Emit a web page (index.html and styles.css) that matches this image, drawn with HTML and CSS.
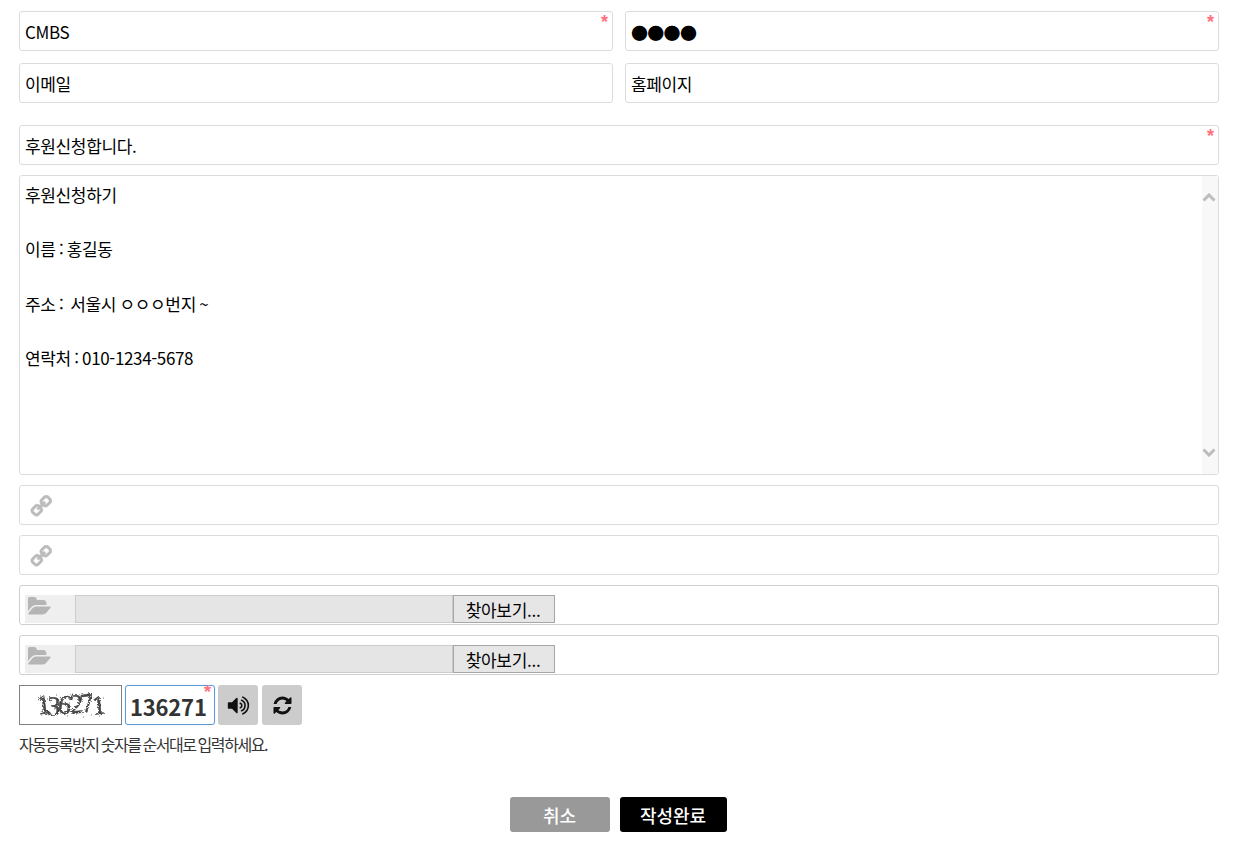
FILE: index.html
```html
<!DOCTYPE html>
<html lang="ko">
<head>
<meta charset="utf-8">
<title>후원신청</title>
<link rel="stylesheet" href="styles.css">
</head>
<body>
<svg class="defs" width="0" height="0" aria-hidden="true">
  <defs>
    <filter id="rough" x="-10%" y="-10%" width="120%" height="120%">
      <feTurbulence type="fractalNoise" baseFrequency="0.6" numOctaves="2" seed="7" result="n"/>
      <feDisplacementMap in="SourceGraphic" in2="n" scale="3.6"/>
    </filter>
  </defs>
  <symbol id="i-link" viewBox="0 0 1792 1792"><path d="M1456 1216q0-40-28-68l-208-208q-28-28-68-28-42 0-72 32 3 3 19 18.5t21.5 21.5 15 19 13 25.5 3.5 27.5q0 40-28 68t-68 28q-15 0-27.5-3.5t-25.5-13-19-15-21.5-21.5-18.5-19q-33 31-33 73 0 40 28 68l206 207q27 27 68 27 40 0 68-26l147-146q28-28 28-67zm-703-705q0-40-28-68l-206-207q-28-28-68-28-39 0-68 27l-147 146q-28 28-28 67 0 40 28 68l208 208q27 27 68 27 42 0 72-31-3-3-19-18.5t-21.5-21.5-15-19-13-25.5-3.5-27.5q0-40 28-68t68-28q15 0 27.5 3.5t25.5 13 19 15 21.5 21.5 18.5 19q33-31 33-73zm895 705q0 120-85 203l-147 146q-83 83-203 83-121 0-204-85l-206-207q-83-83-83-203 0-123 88-209l-88-88q-86 88-208 88-120 0-204-84l-208-208q-84-84-84-204t85-203l147-146q83-83 203-83 121 0 204 85l206 207q83 83 83 203 0 123-88 209l88 88q86-88 208-88 120 0 204 84l208 208q84 84 84 204z"/></symbol>
  <symbol id="i-folder" viewBox="0 0 1920 1792"><path d="M1815 952q0 31-31 66l-336 396q-43 51-120.5 86.5t-143.5 35.5h-1088q-34 0-60.5-13t-26.5-43q0-31 31-66l336-396q43-51 120.5-86.5t143.5-35.5h1088q34 0 60.5 13t26.5 43zm-343-344v160h-832q-94 0-197 47.5t-164 119.5l-337 396-5 6q0-4-.5-12.5t-.5-12.5v-960q0-92 66-158t158-66h320q92 0 158 66t66 158v32h544q92 0 158 66t66 158z"/></symbol>
  <symbol id="i-volume" viewBox="0 0 1792 1792"><path d="M832 352v1088q0 26-19 45t-45 19-45-19l-333-333h-262q-26 0-45-19t-19-45v-384q0-26 19-45t45-19h262l333-333q19-19 45-19t45 19 19 45zm384 544q0 76-42.5 141.5t-112.5 93.5q-10 5-25 5-26 0-45-18.5t-19-45.5q0-21 12-35.5t29-25 34-23 29-36 12-56.5-12-56.5-29-36-34-23-29-25-12-35.5q0-27 19-45.5t45-18.5q15 0 25 5 70 27 112.5 93t42.5 142zm256 0q0 153-85 282.5t-225 188.5q-13 5-25 5-27 0-46-19t-19-45q0-39 39-59 56-29 76-44 74-54 115.5-135.500t41.500-173.500-41.500-173.500-115.500-135.500q-20-15-76-44-39-20-39-59 0-26 19-45t45-19q13 0 26 5 140 59 225 188.500t85 282.500zm256 0q0 230-127 422.500t-338 283.500q-13 5-26 5-26 0-45-19t-19-45q0-36 39-59 7-4 22.500-10.500t22.500-10.500q46-25 82-51 123-91 192-227t69-289-69-289-192-227q-36-26-82-51-7-4-22.500-10.500t-22.500-10.500q-39-23-39-59 0-26 19-45t45-19q13 0 26 5 211 91 338 283.500t127 422.500z"/></symbol>
  <symbol id="i-refresh" viewBox="0 0 1792 1792"><path d="M1639 1056q0 5-1 7-64 268-268 434.500t-478 166.500q-146 0-282.500-55t-243.500-157l-129 129q-19 19-45 19t-45-19-19-45v-448q0-26 19-45t45-19h448q26 0 45 19t19 45-19 45l-137 137q71 66 161 102t187 36q134 0 250-65t186-179q11-17 53-117 8-23 30-23h192q13 0 22.500 9.500t9.500 22.500zm25-800v448q0 26-19 45t-45 19h-448q-26 0-45-19t-19-45 19-45l138-138q-148-137-349-137-134 0-250 65t-186 179q-11 17-53 117-8 23-30 23h-199q-13 0-22.500-9.500t-9.500-22.500v-7q65-268 270-434.500t480-166.500q146 0 284 55.500t245 156.500l130-129q19-19 45-19t45 19 19 45z"/></symbol>
</svg>

<form class="form">
  <div class="pair">
    <div class="field">CMBS<span class="req">*</span></div>
    <div class="field field-pw">●●●●<span class="req">*</span></div>
  </div>
  <div class="pair">
    <div class="field">이메일</div>
    <div class="field field-home">홈페이지</div>
  </div>
  <div class="field field-subject">후원신청합니다.<span class="req">*</span></div>
  <div class="editor">
    <div class="editor-text">후원신청하기

이름 : 홍길동

주소 :  서울시 ㅇㅇㅇ번지 ~

연락처 : 010-1234-5678</div>
    <div class="scrollbar">
      <svg class="chev" viewBox="0 0 14 9"><path d="M1.5 7.5 7 2l5.500 5.500"/></svg>
      <svg class="chev" viewBox="0 0 14 9"><path d="M1.500 1.500 7 7l5.500-5.500"/></svg>
    </div>
  </div>
  <div class="field field-icon"><svg class="ico-link"><use href="#i-link"/></svg></div>
  <div class="field field-icon"><svg class="ico-link"><use href="#i-link"/></svg></div>
  <div class="field file-row">
    <span class="file-ico"><svg class="ico-folder"><use href="#i-folder"/></svg></span>
    <span class="file-name"></span>
    <span class="file-btn">찾아보기...</span>
  </div>
  <div class="field file-row">
    <span class="file-ico"><svg class="ico-folder"><use href="#i-folder"/></svg></span>
    <span class="file-name"></span>
    <span class="file-btn">찾아보기...</span>
  </div>
  <div class="captcha">
    <div class="captcha-img">
      <svg class="captcha-svg" viewBox="0 0 101 38">
        <g class="captcha-noise">
          <path d="M20 10h1M24 27h1M27 13h1M31 29h1M36 9h1M40 27h1M44 12h1M47 30h1M52 8h1M56 28h1M60 11h1M63 31h1M68 8h1M71 29h1M75 13h1M79 30h1M83 12h1M22 19h1M34 23h1M49 17h1M65 24h1M77 21h1"/>
        </g>
        <g class="captcha-glyphs">
          <text class="captcha-num" x="17" y="28" transform="rotate(-8 21 20)">1</text>
          <text class="captcha-num" x="27" y="29" transform="rotate(4 31 20)">3</text>
          <text class="captcha-num" x="38" y="27" transform="rotate(10 42 20)">6</text>
          <text class="captcha-num" x="50" y="27" transform="rotate(-4 56 20)">2</text>
          <text class="captcha-num" x="61" y="26" transform="rotate(-10 68 20)">7</text>
          <text class="captcha-num" x="72" y="28" transform="rotate(-6 80 20)">1</text>
        </g>
      </svg>
    </div>
    <div class="captcha-input">136271<span class="req req-cap">*</span></div>
    <button type="button" class="cap-btn"><svg class="ico-vol"><use href="#i-volume"/></svg></button>
    <button type="button" class="cap-btn"><svg class="ico-ref"><use href="#i-refresh"/></svg></button>
  </div>
  <p class="hint">자동등록방지 숫자를 순서대로 입력하세요.</p>
  <div class="actions">
    <button type="button" class="btn btn-cancel">취소</button>
    <button type="button" class="btn btn-submit">작성완료</button>
  </div>
</form>
</body>
</html>
```

FILE: styles.css
```css
* { box-sizing: border-box; }

html, body { margin: 0; background: #fff; }

body {
  font-family: "Noto Sans CJK KR", "Noto Sans", sans-serif;
  font-size: 17px;
  color: #000;
  overflow: hidden;
}

.defs { display: block; height: 0; }

.form {
  width: 1200px;
  margin: 11px 0 0 19px;
  display: flex;
  flex-direction: column;
  gap: 10px;
}

.pair { display: grid; grid-template-columns: 594px 594px; gap: 12px; }
.pair + .pair { margin-top: 2px; }

.field {
  position: relative;
  height: 40px;
  border: 1px solid #dcdcdc;
  border-radius: 3px;
  padding: 0 5px;
  line-height: 40px;
  letter-spacing: -0.35px;
  background: #fff;
}

.field-pw { letter-spacing: -0.7px; line-height: 42px; }
.field-subject { margin-top: 12px; }

.req {
  position: absolute;
  top: 1px;
  right: 4px;
  color: #ff6f7d;
  font-size: 18px;
  line-height: 18px;
  letter-spacing: 0;
  font-family: "Liberation Sans", sans-serif;
  font-weight: 700;
}

.editor {
  display: flex;
  height: 300px;
  border: 1px solid #dcdcdc;
  border-radius: 3px;
}

.editor-text {
  flex: 1;
  padding: 5px;
  line-height: 27.2px;
  letter-spacing: -0.35px;
  word-spacing: -1px;
  white-space: pre-wrap;
}

.scrollbar {
  width: 16px;
  background: #f8f8f8;
  display: flex;
  flex-direction: column;
  justify-content: space-between;
  align-items: center;
  padding: 17px 2px 17px 0;
}

.chev { width: 14px; height: 9px; }
.chev path { fill: none; stroke: #bdbdbd; stroke-width: 3; }

.field-icon { display: flex; align-items: center; }

.ico-link {
  width: 23px;
  height: 23px;
  fill: #bbb;
  stroke: #bbb;
  stroke-width: 55;
  margin-left: 4px;
  margin-top: 3px;
  transform: scaleX(-1);
}

.file-row {
  display: flex;
  align-items: flex-start;
  padding: 9px 0 0 5px;
  border-color: #cfcfcf;
}

.file-ico {
  width: 50px;
  height: 28px;
  background: #efefef;
  display: flex;
  align-items: center;
}

.ico-folder { width: 24px; height: 23px; fill: #b5b5b5; margin-left: 3px; margin-top: -6px; }

.file-name {
  width: 378px;
  height: 28px;
  background: #e5e5e5;
  border: 1px solid #ccc;
}

.file-btn {
  width: 102px;
  height: 28px;
  padding-right: 2px;
  background: #e6e6e6;
  border: 1px solid #a6a6a6;
  line-height: 28px;
  text-align: center;
  letter-spacing: -0.3px;
}

.captcha { display: flex; height: 40px; }

.captcha-img {
  width: 103px;
  height: 40px;
  border: 1px solid #808080;
  background: #fff;
}

.captcha-svg { display: block; width: 101px; height: 38px; }
.captcha-noise path { stroke: #777; stroke-width: 1; fill: none; }
.captcha-glyphs { filter: url(#rough); }

.captcha-num {
  font-family: "Liberation Serif", serif;
  font-size: 27px;
  fill: #444;
  stroke: #444;
  stroke-width: 0.5;
}

.captcha-input {
  position: relative;
  width: 90px;
  height: 40px;
  margin-left: 3px;
  border: 1px solid #5b9bd5;
  border-radius: 3px;
  padding-left: 4px;
  font-size: 22px;
  font-weight: 700;
  line-height: 40px;
  letter-spacing: -0.2px;
  color: #333;
  box-shadow: 0 0 1px #9ecaed;
}

.req-cap { top: -3px; right: 3px; }

.cap-btn {
  width: 40px;
  height: 40px;
  margin-left: 3px;
  padding: 0;
  border: 0;
  border-radius: 3px;
  background: #ccc;
  display: flex;
  align-items: center;
  justify-content: center;
}

.cap-btn + .cap-btn { margin-left: 4px; }

.ico-vol { width: 23px; height: 23px; fill: #111; }
.ico-ref { width: 21px; height: 21px; fill: #111; }

.hint {
  margin: -1px 0 0;
  font-size: 16px;
  line-height: 20px;
  letter-spacing: -1.45px;
  word-spacing: -1px;
  color: #333;
}

.actions {
  display: flex;
  justify-content: center;
  gap: 10px;
  margin-top: 33px;
  padding-right: 2px;
}

.btn {
  height: 35px;
  border: 0;
  border-radius: 3px;
  padding: 0;
  font-family: inherit;
  font-size: 18px;
  font-weight: 500;
  color: #fff;
}

.btn-cancel { width: 100px; background: #999; }
.btn-submit { width: 107px; background: #000; }
```
